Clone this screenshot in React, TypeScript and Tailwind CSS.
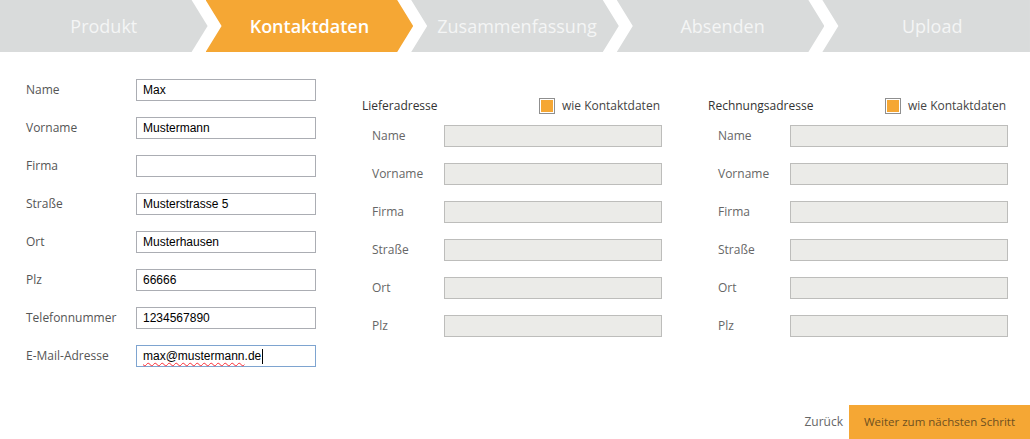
import React from "react";

const steps = [
  { label: "Produkt", active: false },
  { label: "Kontaktdaten", active: true },
  { label: "Zusammenfassung", active: false },
  { label: "Absenden", active: false },
  { label: "Upload", active: false },
];

const contact: [string, string][] = [
  ["Name", "Max"],
  ["Vorname", "Mustermann"],
  ["Firma", ""],
  ["Straße", "Musterstrasse 5"],
  ["Ort", "Musterhausen"],
  ["Plz", "66666"],
  ["Telefonnummer", "1234567890"],
];

const addressFields = ["Name", "Vorname", "Firma", "Straße", "Ort", "Plz"];

function StepBar() {
  return (
    <div className="flex h-[52px]">
      {steps.map((s, i) => {
        const clip =
          i === 0
            ? "[clip-path:polygon(0_0,calc(100%-16px)_0,100%_50%,calc(100%-16px)_100%,0_100%)]"
            : i === steps.length - 1
            ? "[clip-path:polygon(0_0,100%_0,100%_100%,0_100%,16px_50%)]"
            : "[clip-path:polygon(0_0,calc(100%-16px)_0,100%_50%,calc(100%-16px)_100%,0_100%,16px_50%)]";
        return (
          <div
            key={s.label}
            className={`flex flex-1 items-center justify-center text-[18px] ${clip} ${
              s.active ? "bg-[#f5a734] font-semibold text-white" : "bg-[#d9dbdb] text-[#f4f5f5]"
            } ${i > 0 ? "-ml-[2px]" : ""}`}
          >
            <span className={i === steps.length - 1 ? "pl-[12px]" : i > 1 ? "pl-[4px]" : ""}>{s.label}</span>
          </div>
        );
      })}
    </div>
  );
}

function Checkbox() {
  return (
    <span className="flex h-[16px] w-[16px] items-center justify-center border border-[#8f8f8f] bg-white p-[1px]">
      <span className="h-full w-full bg-[#f5a734]" />
    </span>
  );
}

function AddressColumn({ title }: { title: string }) {
  return (
    <div className="flex w-[300px] flex-col pt-[43px]">
      <div className="flex h-[22px] items-center justify-between">
        <span className="text-[12px] text-[#333]">{title}</span>
        <span className="flex items-center gap-[7px] pr-[2px] text-[12px] text-[#444]">
          <Checkbox />
          wie Kontaktdaten
        </span>
      </div>
      {addressFields.map((f) => (
        <div key={f} className="flex h-[38px] items-center pl-[10px]">
          <span className="w-[72px] text-[12px] text-[#666]">{f}</span>
          <div className="h-[22px] flex-1 border border-[#bdbdbb] bg-[#ebebe8]" />
        </div>
      ))}
    </div>
  );
}

export default function App() {
  return (
    <div className="h-[439px] w-[1030px] overflow-hidden bg-white font-['Open_Sans',sans-serif]">
      <StepBar />

      <div className="flex gap-[46px] pl-[26px]">
        <div className="flex w-[290px] flex-col pt-[19px]">
          {contact.map(([label, value]) => (
            <div key={label} className="flex h-[38px] items-center">
              <span className="w-[110px] text-[12px] text-[#555]">{label}</span>
              <input
                readOnly
                spellCheck={false}
                value={value}
                className="h-[22px] w-[180px] border border-[#abadb3] bg-white px-[6px] font-['Liberation_Sans',Arial,sans-serif] text-[12px] text-black outline-none"
              />
            </div>
          ))}
          <div className="flex h-[38px] items-center">
            <span className="w-[110px] text-[12px] text-[#555]">E-Mail-Adresse</span>
            <div className="flex h-[22px] w-[180px] items-center border border-[#7ea4d0] bg-white px-[6px] font-['Liberation_Sans',Arial,sans-serif] text-[12px] text-black">
              <span className="underline decoration-red-500 decoration-wavy decoration-1 underline-offset-2">
                max@mustermann
              </span>
              <span>.de</span>
              <span className="ml-[1px] h-[15px] w-px bg-black" />
            </div>
          </div>
        </div>

        <AddressColumn title="Lieferadresse" />
        <AddressColumn title="Rechnungsadresse" />
      </div>

      <div className="mt-[30px] flex items-center justify-end gap-[6px]">
        <span className="text-[12px] text-[#666]">Zurück</span>
        <div className="flex h-[34px] w-[181px] items-center justify-center bg-[#f5a734] text-[11.5px] text-[#6e5020]">
          Weiter zum nächsten Schritt
        </div>
      </div>
    </div>
  );
}
